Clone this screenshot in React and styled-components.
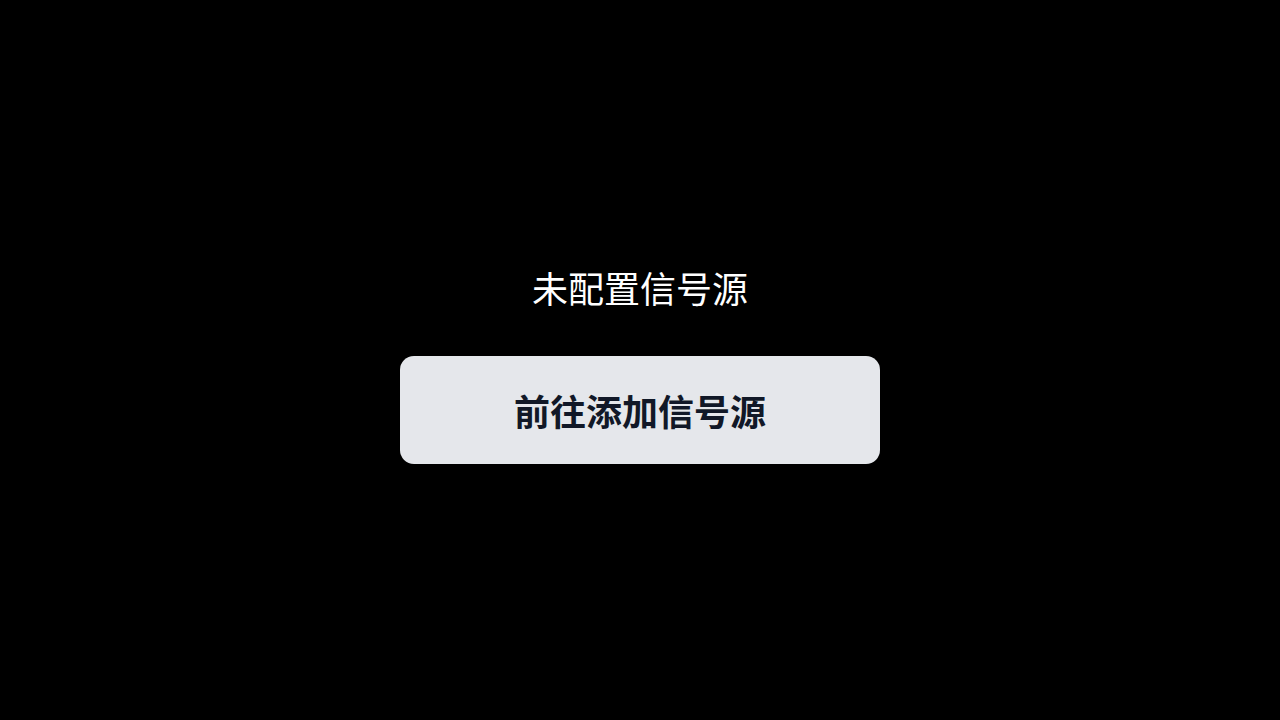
import React from 'react'
import styled, { createGlobalStyle } from 'styled-components'

const GlobalStyle = createGlobalStyle`
  html, body {
    margin: 0;
    padding: 0;
    background: #000;
  }
  body {
    font-family: "Noto Sans CJK SC", "Noto Sans", sans-serif;
  }
`

const Screen = styled.div`
  display: flex;
  flex-direction: column;
  align-items: center;
  justify-content: center;
  box-sizing: border-box;
  min-height: 100vh;
  padding-top: 7px;
  background: #000;
`

const Title = styled.h1`
  margin: 0 0 45px;
  font-size: 36px;
  line-height: 48px;
  font-weight: 400;
  color: #fff;
`

const ActionButton = styled.button`
  display: flex;
  align-items: center;
  justify-content: center;
  width: 480px;
  height: 108px;
  border: none;
  border-radius: 14px;
  background: #e5e7eb;
  color: #111827;
  font-family: inherit;
  font-size: 36px;
  font-weight: 700;
  cursor: pointer;
`

const App = () => (
  <>
    <GlobalStyle />
    <Screen>
      <Title>未配置信号源</Title>
      <ActionButton>前往添加信号源</ActionButton>
    </Screen>
  </>
)

export default App
